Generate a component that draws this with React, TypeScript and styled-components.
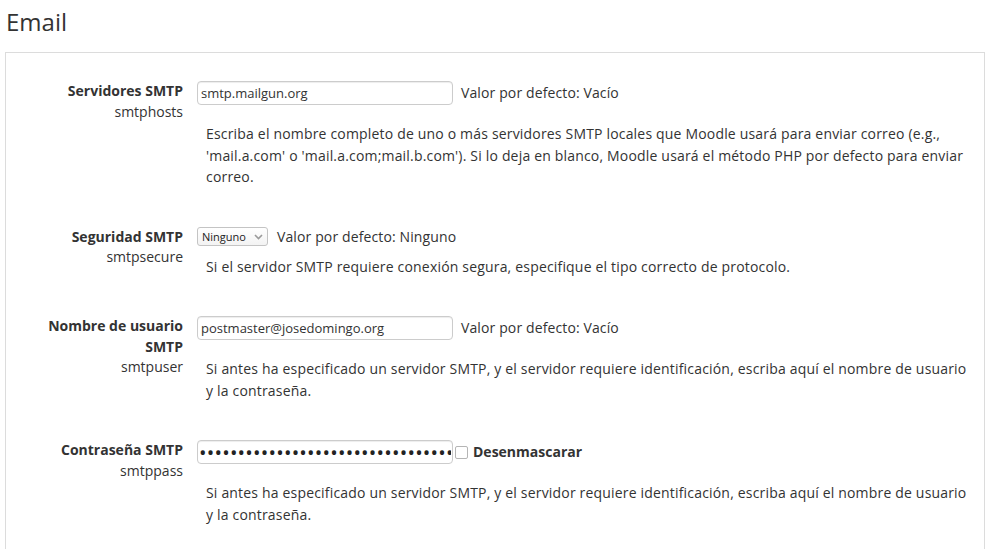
import React from "react";
import styled, { createGlobalStyle } from "styled-components";

const Global = createGlobalStyle`
  html, body { margin: 0; padding: 0; background: #fff; }
  body {
    font-family: "Open Sans", "Liberation Sans", sans-serif;
    font-size: 14px;
    color: #333;
  }
`;

const Page = styled.div`
  padding: 0 10px 0 5px;
`;

const Heading = styled.h2`
  margin: 0 0 14px;
  padding: 6px 0 0 1px;
  font-size: 24px;
  font-weight: 400;
  line-height: 32px;
  color: #333;
`;

const Box = styled.div`
  border: 1px solid #dcdcdc;
  padding: 28px 0 40px;
`;

const Row = styled.div`
  display: grid;
  grid-template-columns: 177px 1fr;
  column-gap: 14px;
  margin-bottom: 39px;
`;

const Label = styled.div`
  text-align: right;
  line-height: 20.5px;
`;

const Title = styled.div`
  font-weight: 700;
`;

const Name = styled.div`
  font-weight: 400;
`;

const Content = styled.div`
  min-width: 0;
`;

const SettingLine = styled.div<{ $spaced?: boolean }>`
  display: flex;
  align-items: center;
  line-height: 20px;
  padding-bottom: ${(p) => (p.$spaced ? "9px" : "0")};
`;

const TextInput = styled.input`
  box-sizing: border-box;
  width: 256px;
  height: 24px;
  margin: 0;
  padding: 0 3px;
  border: 1px solid #ccc;
  border-radius: 4px;
  box-shadow: inset 0 1px 1px rgba(0, 0, 0, 0.075);
  font-family: "Open Sans", "Liberation Sans", sans-serif;
  font-size: 13px;
  color: #333;
  background: #fff;
  outline: none;
`;

const PasswordInput = styled(TextInput)`
  padding: 0 1px;
  font-size: 20px;
  letter-spacing: 0.2px;
  color: #222;
`;

const DefaultInfo = styled.span<{ $gap: number }>`
  margin-left: ${(p) => p.$gap}px;
  white-space: nowrap;
  letter-spacing: 0.12px;
`;

const SelectBox = styled.div`
  box-sizing: border-box;
  display: inline-flex;
  align-items: center;
  justify-content: space-between;
  width: 71px;
  height: 19px;
  padding: 0 4px 0 4px;
  border: 1px solid #c4c4c4;
  border-radius: 3px;
  background: linear-gradient(#fff, #f3f3f3);
  font-size: 11px;
  line-height: 17px;
  color: #222;
`;

const Check = styled.input`
  appearance: none;
  box-sizing: border-box;
  width: 13px;
  height: 13px;
  margin: 0 5px 0 2px;
  border: 1px solid #b5b5b5;
  border-radius: 2px;
  background: #fff;
`;

const CheckLabel = styled.span`
  font-weight: 700;
`;

const Description = styled.div`
  margin: 9px 0 0 9px;
  padding-right: 10px;
  line-height: 21.5px;
  letter-spacing: 0.18px;
`;

const Chevron = () => (
  <svg width="9" height="6" viewBox="0 0 9 6" fill="none">
    <path d="M1 1 L4.5 4.5 L8 1" stroke="#9a9a9a" strokeWidth="1.6" />
  </svg>
);

export default function App() {
  return (
    <Page>
      <Global />
      <Heading>Email</Heading>
      <Box>
        <Row>
          <Label>
            <Title>Servidores SMTP</Title>
            <Name>smtphosts</Name>
          </Label>
          <Content>
            <SettingLine $spaced>
              <TextInput type="text" defaultValue="smtp.mailgun.org" />
              <DefaultInfo $gap={8}>Valor por defecto: Vacío</DefaultInfo>
            </SettingLine>
            <Description>
              Escriba el nombre completo de uno o más servidores SMTP locales que Moodle usará para enviar correo (e.g.,
              'mail.a.com' o 'mail.a.com;mail.b.com'). Si lo deja en blanco, Moodle usará el método PHP por defecto para
              enviar correo.
            </Description>
          </Content>
        </Row>
        <Row>
          <Label>
            <Title>Seguridad SMTP</Title>
            <Name>smtpsecure</Name>
          </Label>
          <Content>
            <SettingLine>
              <SelectBox>
                <span>Ninguno</span>
                <Chevron />
              </SelectBox>
              <DefaultInfo $gap={9}>Valor por defecto: Ninguno</DefaultInfo>
            </SettingLine>
            <Description>
              Si el servidor SMTP requiere conexión segura, especifique el tipo correcto de protocolo.
            </Description>
          </Content>
        </Row>
        <Row>
          <Label>
            <Title>
              Nombre de usuario
              <br />
              SMTP
            </Title>
            <Name>smtpuser</Name>
          </Label>
          <Content>
            <SettingLine $spaced>
              <TextInput type="text" defaultValue="postmaster@josedomingo.org" />
              <DefaultInfo $gap={8}>Valor por defecto: Vacío</DefaultInfo>
            </SettingLine>
            <Description>
              Si antes ha especificado un servidor SMTP, y el servidor requiere identificación, escriba aquí el nombre
              de usuario y la contraseña.
            </Description>
          </Content>
        </Row>
        <Row>
          <Label>
            <Title>Contraseña SMTP</Title>
            <Name>smtppass</Name>
          </Label>
          <Content>
            <SettingLine $spaced>
              <PasswordInput type="password" defaultValue="passwordpasswordpasswordpasswordpasswordpassword" />
              <Check type="checkbox" />
              <CheckLabel>Desenmascarar</CheckLabel>
            </SettingLine>
            <Description>
              Si antes ha especificado un servidor SMTP, y el servidor requiere identificación, escriba aquí el nombre
              de usuario y la contraseña.
            </Description>
          </Content>
        </Row>
      </Box>
    </Page>
  );
}
